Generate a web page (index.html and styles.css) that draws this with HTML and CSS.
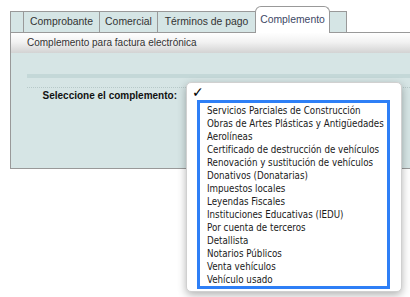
FILE: index.html
```html
<!DOCTYPE html>
<html lang="es">
<head>
  <meta charset="UTF-8" />
  <title>Complemento</title>
  <link rel="stylesheet" href="styles.css">
</head>
<body>
  <div class="panel">
    <div class="tabs">
      <div class="tab tab-blank-start"></div>
      <div class="tab tab-comprobante">Comprobante</div>
      <div class="tab tab-comercial">Comercial</div>
      <div class="tab tab-terminos">Términos de pago</div>
      <div class="tab tab-complemento active">Complemento</div>
      <div class="tab tab-blank-end"></div>
    </div>
    <div class="panel-header">Complemento para factura electrónica</div>
    <div class="panel-body">
      <div class="band"></div>
      <div class="field-row">
        <label class="field-label">Seleccione el complemento:</label>
      </div>
    </div>
  </div>

  <!-- open select popup -->
  <div class="select-popup">
    <span class="check">✓</span>
    <ul class="listbox">
      <li>Servicios Parciales de Construcción</li>
      <li>Obras de Artes Plásticas y Antigüedades</li>
      <li>Aerolíneas</li>
      <li>Certificado de destrucción de vehículos</li>
      <li>Renovación y sustitución de vehículos</li>
      <li>Donativos (Donatarias)</li>
      <li>Impuestos locales</li>
      <li>Leyendas Fiscales</li>
      <li>Instituciones Educativas (IEDU)</li>
      <li>Por cuenta de terceros</li>
      <li>Detallista</li>
      <li>Notarios Públicos</li>
      <li>Venta vehículos</li>
      <li>Vehículo usado</li>
    </ul>
  </div>
</body>
</html>
```

FILE: styles.css
```css
* {
  box-sizing: border-box;
}
html, body {
  overflow: hidden;
}
body {
  margin: 0;
  background: #fff;
  font-family: 'Liberation Sans', Arial, sans-serif;
  font-size: 10px;
  color: #333;
}
.panel {
  margin: 11px 0 0 10px;
  width: 420px;
  border-left: 1px solid #999;
  border-bottom: 1px solid #999;
}
/* Tabs */
.tabs {
  display: flex;
  align-items: flex-end;
  height: 21px;
  margin-left: -1px;
  position: relative;
}
.tab {
  flex: none;
  height: 21px;
  line-height: 20px;
  text-align: center;
  background: #d5e5e5;
  border: 1px solid #999;
  border-bottom: none;
  margin-left: -1px;
  color: #333;
  font-size: 10.4px;
}
.tab:first-child {
  margin-left: 0;
}
.tab-blank-start { width: 14px; }
.tab-comprobante { width: 77px; }
.tab-comercial { width: 59px; }
.tab-terminos { width: 99px; }
.tab-complemento { width: 75px; }
.tab-blank-end { width: 18px; }
.tab.active {
  height: 27px;
  line-height: 25px;
  background: #fff;
  border-radius: 6px 6px 0 0;
  color: #3d4866;
  margin-bottom: -1px;
  position: relative;
  z-index: 1;
}
/* Header strip */
.panel-header {
  height: 21px;
  line-height: 20px;
  padding-left: 16px;
  border-top: 1px solid #999;
  background: linear-gradient(#fefefe, #f2f2f2 45%, #d3d3d3);
  color: #333;
}
/* Body */
.panel-body {
  height: 115px;
  background: #d6e5e5;
  padding: 21px 0 0 16px;
}
.band {
  height: 4px;
  background: #c4d8d8;
}
.field-row {
  margin-top: 9px;
  border-top: 1px dotted #b7c9c9;
  display: flex;
}
.field-label {
  width: 150px;
  text-align: right;
  font-weight: bold;
  color: #111;
  line-height: 13px;
  padding-top: 1px;
}
/* Select popup (open native list) */
.select-popup {
  position: absolute;
  left: 186px;
  top: 82px;
  width: 216px;
  height: 210px;
  background: #fff;
  border: 1px solid #d0d0d0;
  border-radius: 5px;
  box-shadow: 0 3px 9px rgba(0, 0, 0, 0.3);
}
.check {
  position: absolute;
  left: 5px;
  top: 1px;
  font-family: 'DejaVu Sans', sans-serif;
  font-size: 14px;
  font-weight: bold;
  color: #000;
}
.listbox {
  position: absolute;
  left: 10px;
  top: 17px;
  width: 193px;
  height: 189px;
  margin: 0;
  padding: 1px 0 0 7px;
  list-style: none;
  border: 3px solid #2e7ff6;
  font-family: 'DejaVu Sans Condensed', 'DejaVu Sans', sans-serif;
  font-stretch: condensed;
  font-size: 9.7px;
  line-height: 13px;
  color: #1a1a1a;
  white-space: nowrap;
}
```
